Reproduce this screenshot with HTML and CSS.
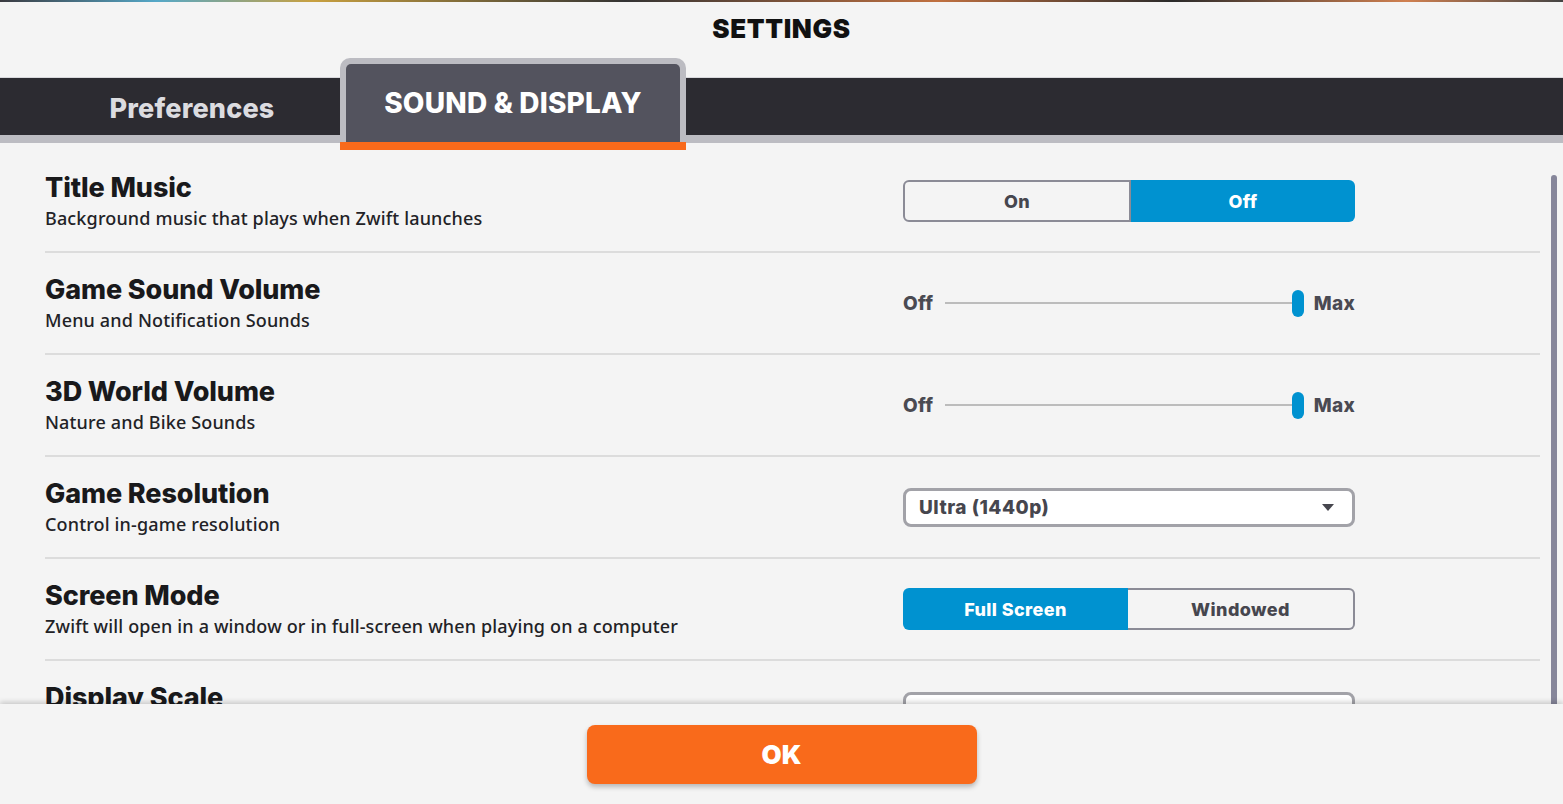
FILE: index.html
```html
<!DOCTYPE html>
<html>
<head>
<meta charset="utf-8">
<link rel="stylesheet" href="styles.css">
</head>
<body>
<div class="strip"></div>
<header class="header"><h1 class="heading">SETTINGS</h1></header>
<nav class="tabbar">
  <div class="tab">Preferences</div>
  <div class="tab tab-active">
    <div class="tab-inner">SOUND &amp; DISPLAY</div>
    <div class="tab-underline"></div>
  </div>
</nav>
<main class="content">
  <div class="row">
    <div class="label">
      <div class="title">Title Music</div>
      <div class="desc">Background music that plays when Zwift launches</div>
    </div>
    <div class="control">
      <div class="seg">
        <div class="seg-item seg-left">On</div>
        <div class="seg-item seg-on seg-right-on">Off</div>
      </div>
    </div>
  </div>
  <div class="row">
    <div class="label">
      <div class="title">Game Sound Volume</div>
      <div class="desc">Menu and Notification Sounds</div>
    </div>
    <div class="control">
      <div class="slider">
        <span class="slider-lbl">Off</span>
        <div class="track"><div class="line"></div><div class="thumb"></div></div>
        <span class="slider-lbl">Max</span>
      </div>
    </div>
  </div>
  <div class="row">
    <div class="label">
      <div class="title">3D World Volume</div>
      <div class="desc">Nature and Bike Sounds</div>
    </div>
    <div class="control">
      <div class="slider">
        <span class="slider-lbl">Off</span>
        <div class="track"><div class="line"></div><div class="thumb"></div></div>
        <span class="slider-lbl">Max</span>
      </div>
    </div>
  </div>
  <div class="row">
    <div class="label">
      <div class="title">Game Resolution</div>
      <div class="desc">Control in-game resolution</div>
    </div>
    <div class="control">
      <div class="dropdown"><span>Ultra (1440p)</span><span class="caret"></span></div>
    </div>
  </div>
  <div class="row">
    <div class="label">
      <div class="title">Screen Mode</div>
      <div class="desc">Zwift will open in a window or in full-screen when playing on a computer</div>
    </div>
    <div class="control">
      <div class="seg">
        <div class="seg-item seg-on seg-left-on">Full Screen</div>
        <div class="seg-item seg-right">Windowed</div>
      </div>
    </div>
  </div>
  <div class="row">
    <div class="label">
      <div class="title">Display Scale</div>
      <div class="desc">&nbsp;</div>
    </div>
    <div class="control">
      <div class="dropdown"><span></span><span class="caret"></span></div>
    </div>
  </div>
  <div class="scrollbar"></div>
</main>
<footer class="footer">
  <button class="ok">OK</button>
</footer>
</body>
</html>
```
FILE: styles.css
```css
html, body {
  margin: 0;
  padding: 0;
}
body {
  width: 1563px;
  height: 804px;
  overflow: hidden;
  background: #f4f4f4;
  display: flex;
  flex-direction: column;
  font-family: "Inter", "Noto Sans", sans-serif;
  color: #1b1b1d;
}
.strip {
  height: 2px;
  flex: none;
  background: linear-gradient(90deg, #3a3a40 0%, #55a8c8 10%, #c8a040 20%, #333 40%, #c07040 60%, #2a2a2a 75%, #d08050 90%, #444 100%);
}
.header {
  height: 76px;
  flex: none;
  display: flex;
  justify-content: center;
  align-items: flex-start;
}
.heading {
  margin: 12px 0 0;
  font-size: 26px;
  font-weight: 900;
  letter-spacing: 0.6px;
  line-height: 30px;
  color: #111;
}
.tabbar {
  flex: none;
  height: 57px;
  background: #2c2b31;
  border-top: 1px solid #d8d8dc;
  border-bottom: 8px solid #bcbcc2;
  display: flex;
  position: relative;
  z-index: 2;
  margin-top: -1px;
}
.tab {
  width: 340px;
  display: flex;
  align-items: center;
  justify-content: center;
  padding: 4px 0 0 44px;
  box-sizing: border-box;
  font-size: 27px;
  font-weight: 800;
  color: #dcdce0;
  letter-spacing: 0.2px;
}
.tab-active {
  width: 346px;
  height: 92px;
  margin-top: -20px;
  padding: 6px 6px 0;
  background: #bcbcc2;
  border-radius: 10px 10px 0 0;
  flex-direction: column;
  align-items: stretch;
  justify-content: flex-start;
}
.tab-inner {
  flex: 1;
  background: #53535e;
  border-radius: 5px 5px 0 0;
  display: flex;
  align-items: center;
  justify-content: center;
  color: #ffffff;
  font-size: 28px;
  font-weight: 800;
  letter-spacing: 0.2px;
  padding-bottom: 1px;
}
.tab-underline {
  height: 8px;
  margin: 0 -6px;
  background: #f96a1b;
}
.content {
  flex: 1;
  position: relative;
  overflow: hidden;
  padding: 8px 23px 0 45px;
}
.row {
  height: 102px;
  box-sizing: border-box;
  border-bottom: 2px solid #dcdcdc;
  display: flex;
  align-items: center;
}
.label {
  flex: 1;
}
.title {
  font-size: 27px;
  font-weight: 800;
  line-height: 32px;
  letter-spacing: -0.1px;
  color: #19191b;
}
.desc {
  font-family: "Noto Sans", sans-serif;
  font-size: 18px;
  font-weight: 500;
  line-height: 26px;
  margin-top: 1px;
  letter-spacing: 0.15px;
  color: #222226;
}
.control {
  width: 452px;
  margin-right: 185px;
}
.seg {
  display: flex;
  height: 42px;
}
.seg-item {
  flex: 1;
  display: flex;
  align-items: center;
  justify-content: center;
  font-size: 18px;
  font-weight: 800;
  letter-spacing: 0.4px;
  color: #46464e;
  box-sizing: border-box;
}
.seg-left {
  border: 2px solid #8b8b96;
  border-radius: 6px 0 0 6px;
}
.seg-right {
  border: 2px solid #8b8b96;
  border-left: none;
  border-radius: 0 6px 6px 0;
}
.seg-on {
  background: #0092d0;
  color: #ffffff;
}
.seg-left-on {
  border-radius: 6px 0 0 6px;
}
.seg-right-on {
  border-radius: 0 6px 6px 0;
}
.slider {
  display: flex;
  align-items: center;
  height: 28px;
}
.slider-lbl {
  font-size: 19px;
  font-weight: 800;
  letter-spacing: 0.3px;
  color: #4a4a52;
}
.track {
  flex: 1;
  display: flex;
  align-items: center;
  margin: 0 10px 0 12px;
}
.line {
  flex: 1;
  height: 2px;
  background: #bcbcbc;
}
.thumb {
  width: 12px;
  height: 27px;
  border-radius: 6px;
  background: #0092d0;
}
.dropdown {
  height: 39px;
  box-sizing: border-box;
  border: 3px solid #a2a2a8;
  border-radius: 8px;
  background: #ffffff;
  display: flex;
  align-items: center;
  justify-content: space-between;
  padding: 0 18px 0 13px;
  font-size: 19px;
  font-weight: 800;
  letter-spacing: 0.5px;
  color: #46464e;
}
.caret {
  width: 0;
  height: 0;
  border-left: 6px solid transparent;
  border-right: 6px solid transparent;
  border-top: 7px solid #46464e;
}
.scrollbar {
  position: absolute;
  right: 6px;
  top: 32px;
  bottom: 0;
  width: 6px;
  background: #86869a;
  border-radius: 3px 3px 0 0;
}
.footer {
  flex: none;
  height: 100px;
  background: #f4f4f4;
  box-shadow: 0 -2px 5px rgba(0, 0, 0, 0.18);
  position: relative;
  z-index: 3;
  display: flex;
  justify-content: center;
  align-items: flex-start;
}
.ok {
  margin-top: 21px;
  width: 390px;
  height: 59px;
  border: none;
  border-radius: 8px;
  background: #f96a1b;
  box-shadow: 0 3px 5px rgba(0, 0, 0, 0.25);
  font-family: "Inter", sans-serif;
  font-size: 26px;
  font-weight: 900;
  color: #ffffff;
}
```
